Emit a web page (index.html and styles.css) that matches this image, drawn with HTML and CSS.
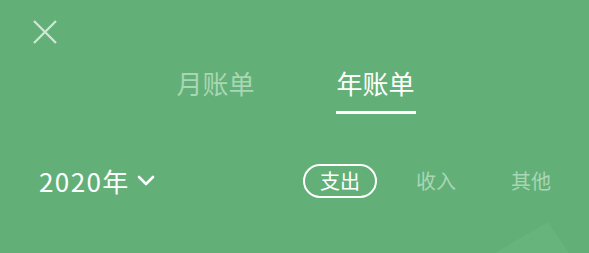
FILE: index.html
```html
<!DOCTYPE html>
<html lang="zh">
<head>
<meta charset="utf-8">
<link rel="stylesheet" href="styles.css">
</head>
<body>
<div class="page">
  <svg class="deco" width="589" height="253" viewBox="0 0 589 253">
    <polygon points="547,226 420,300 620,320 590,290" fill="#68b47d" stroke="#68b47d" stroke-width="6" stroke-linejoin="round"/>
  </svg>
  <div class="topbar">
    <svg class="close" width="24" height="24" viewBox="0 0 24 24">
      <path d="M1 1 L23 23 M23 1 L1 23" stroke="#cfe8d6" stroke-width="2.2" fill="none"/>
    </svg>
  </div>
  <div class="tabs">
    <div class="tab">月账单</div>
    <div class="tab active">年账单</div>
  </div>
  <div class="filter-row">
    <div class="year"><span class="num">2020</span>年
      <svg class="chev" width="18" height="12" viewBox="0 0 18 12">
        <path d="M2 2 L9 9 L16 2" stroke="#fff" stroke-width="2.6" fill="none" stroke-linecap="round" stroke-linejoin="round"/>
      </svg>
    </div>
    <div class="types">
      <div class="type selected">支出</div>
      <div class="type">收入</div>
      <div class="type">其他</div>
    </div>
  </div>
</div>
</body>
</html>
```
FILE: styles.css
```css
html, body {
  margin: 0;
  padding: 0;
}
body {
  background: #62b078;
  font-family: "Noto Sans CJK SC", "Noto Sans", sans-serif;
  color: #fff;
}
.page {
  position: relative;
  width: 589px;
  height: 253px;
  overflow: hidden;
}
.deco {
  position: absolute;
  left: 0;
  top: 0;
}
.topbar {
  position: relative;
  height: 64px;
  padding: 20px 0 0 33px;
  box-sizing: border-box;
}
.close {
  display: block;
}
.tabs {
  position: relative;
  display: flex;
  justify-content: center;
  gap: 80px;
  padding-left: 2px;
}
.tab {
  font-size: 26px;
  line-height: 38px;
  color: #a9d6b4;
  padding: 0 1px 9px;
  border-bottom: 3px solid transparent;
}
.tab.active {
  color: #fff;
  border-bottom-color: #fff;
}
.filter-row {
  position: relative;
  display: flex;
  align-items: center;
  justify-content: space-between;
  margin-top: 50px;
  padding: 0 22px 0 39px;
}
.year {
  display: flex;
  align-items: center;
  font-size: 26px;
  line-height: 34px;
}
.num {
  letter-spacing: 1.4px;
}
.chev {
  margin-left: 9px;
}
.types {
  display: flex;
  align-items: center;
  gap: 23px;
}
.type {
  font-size: 20px;
  line-height: 30px;
  padding: 0 14px;
  border: 2px solid transparent;
  border-radius: 17px;
  color: #a9d6b4;
}
.type.selected {
  color: #fff;
  border-color: #fff;
  padding: 0 15px;
}
```
